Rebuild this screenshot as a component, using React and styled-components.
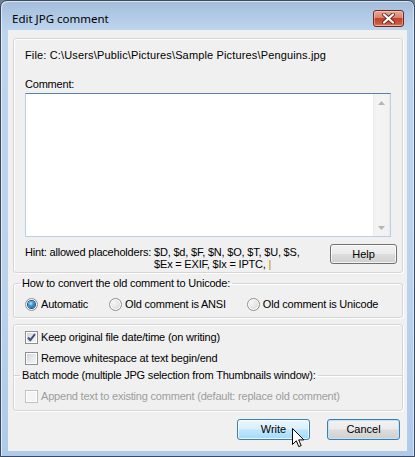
import styled, { createGlobalStyle } from 'styled-components';

const GlobalStyle = createGlobalStyle`
  html, body {
    margin: 0;
    padding: 0;
    background: #6f7f8f;
  }
  body {
    font-family: "Liberation Sans", Arial, sans-serif;
    font-size: 11px;
    letter-spacing: -0.2px;
    color: #000;
  }
  * { box-sizing: border-box; }
`;

const Window = styled.div`
  position: relative;
  width: 415px;
  height: 457px;
  border: 1px solid #3b4b5d;
  border-radius: 7px 7px 0 0;
  background: linear-gradient(180deg, #a3bddb 0, #bdd4ed 28px, #bbd3ed 60%, #aecbea 100%);
  box-shadow: inset 1px 1px 0 rgba(255, 255, 255, 0.6), inset -1px 0 0 rgba(255, 255, 255, 0.5);
  display: flex;
  flex-direction: column;
  padding: 0 7px 5px;
`;

const TitleBar = styled.div`
  height: 29px;
  flex: none;
  display: flex;
  align-items: flex-start;
  justify-content: space-between;
  padding: 0 3px 0 4px;
`;

const Caption = styled.div`
  margin-top: 10px;
  font-family: "Noto Sans", "Open Sans", sans-serif;
  font-size: 11.5px;
  letter-spacing: 0;
  line-height: 16px;
  color: #000;
`;

const CloseButton = styled.div`
  margin-top: 9px;
  width: 31px;
  height: 17px;
  border: 1px solid #6e2a22;
  border-radius: 3px;
  background: linear-gradient(180deg, #e9a99a 0%, #d9826c 45%, #c1412a 50%, #cd5a3e 85%, #e08a6a 100%);
  box-shadow: inset 0 0 0 1px rgba(255, 220, 210, 0.45);
  display: flex;
  align-items: center;
  justify-content: center;
`;

const Client = styled.div`
  flex: 1;
  background: #f0f0f0;
  padding: 8px 4px 0 5px;
  display: flex;
  flex-direction: column;
`;

const Panel = styled.div`
  border: 1px solid #d5d5d5;
  border-radius: 3px;
  box-shadow: inset 1px 1px 0 #fff, 1px 1px 0 #fff;
  padding: ${(p) => p.$pad || '0'};
  margin-top: ${(p) => p.$top || 0}px;
`;

const Line = styled.div`
  line-height: 13px;
  white-space: nowrap;
  margin-top: ${(p) => p.$top || 0}px;
  letter-spacing: ${(p) => p.$spacing ?? -0.2}px;
`;

const CommentBox = styled.div`
  margin: 2px 6px 0 0;
  height: 144px;
  display: flex;
  border: 1px solid;
  border-color: #5682ad #b6d0e8 #b6d0e8 #b6d0e8;
  background: #fff;
`;

const TextArea = styled.div`
  flex: 1;
`;

const ScrollBar = styled.div`
  width: 17px;
  display: flex;
  flex-direction: column;
  justify-content: space-between;
  background: linear-gradient(90deg, #e9e9e9 0, #f4f4f4 2px, #f2f2f2 15px, #e9e9e9 17px);
`;

const ScrollArrow = styled.div`
  height: 17px;
  display: flex;
  align-items: center;
  justify-content: center;
`;

const HintRow = styled.div`
  margin-top: 7px;
  display: flex;
  align-items: flex-start;
  justify-content: space-between;
`;

const Hint = styled.div`
  display: flex;
  padding-top: 2px;
  line-height: 12px;
  white-space: nowrap;
`;

const HintList = styled.div`
  margin-left: 3px;
`;

const Caret = styled.span`
  color: #c28a00;
`;

const Button = styled.div`
  position: relative;
  width: ${(p) => p.$w || 73}px;
  height: ${(p) => p.$h || 21}px;
  border: 1px solid ${(p) => (p.$variant ? '#3c7fb1' : '#707070')};
  border-radius: 3px;
  background: ${(p) =>
    p.$variant === 'hover'
      ? 'linear-gradient(180deg, #eaf6fd 0%, #d9f0fc 48%, #bee6fd 52%, #a7d9f5 100%)'
      : 'linear-gradient(180deg, #f2f2f2 0%, #ebebeb 48%, #dddddd 52%, #cfcfcf 100%)'};
  box-shadow: inset 0 0 0 1px ${(p) => (p.$variant === 'focus' ? '#c4e3f7' : 'rgba(255,255,255,0.75)')};
  display: flex;
  align-items: center;
  justify-content: center;
  line-height: 13px;
  letter-spacing: 0;
  flex: none;
`;

const Group = styled.fieldset`
  margin: ${(p) => p.$top || 0}px 0 0;
  padding: 0;
  min-width: 0;
  border: 1px solid #d5d5d5;
  border-radius: 3px;
  box-shadow: inset 1px 1px 0 #fff, 1px 1px 0 #fff;
  ${(p) =>
    p.$flat &&
    `
    border-width: 1px 0 0 0;
    border-radius: 0;
    box-shadow: inset 0 1px 0 #fff;
  `}
`;

const Legend = styled.legend`
  margin-left: 6px;
  padding: 0 2px;
  line-height: 13px;
  white-space: nowrap;
`;

const GroupBody = styled.div`
  padding: ${(p) => p.$pad};
`;

const RadioRow = styled.div`
  display: flex;
  gap: 21px;
`;

const Option = styled.label`
  display: flex;
  align-items: center;
  gap: 3px;
  height: 14px;
  line-height: 14px;
  white-space: nowrap;
  color: ${(p) => (p.$disabled ? '#9d9d9d' : '#000')};
  margin: ${(p) => p.$m || 0};
`;

const Radio = styled.span`
  width: 13px;
  height: 13px;
  border-radius: 50%;
  border: 1px solid #8f8f8f;
  background: radial-gradient(circle at 35% 35%, #f6f6f6 0, #e6e6e6 45%, #cfcfcf 100%);
  box-shadow: inset 0 0 0 1px #fff;
  display: flex;
  align-items: center;
  justify-content: center;
  flex: none;
  &::after {
    content: '';
    display: ${(p) => (p.$on ? 'block' : 'none')};
    width: 7px;
    height: 7px;
    border-radius: 50%;
    background: radial-gradient(circle at 40% 35%, #b6e4ff 0, #3d96d6 40%, #0e4c86 100%);
    box-shadow: 0 0 0 1px #1b4f7e;
  }
`;

const Check = styled.span`
  width: 13px;
  height: 13px;
  border: 1px solid ${(p) => (p.$disabled ? '#c2c2c2' : '#8e8f8f')};
  background: ${(p) =>
    p.$disabled
      ? '#f4f4f4'
      : 'linear-gradient(135deg, #cbcfd5 0%, #e6e8eb 50%, #f6f6f6 100%)'};
  box-shadow: inset 0 0 0 1px #fff;
  display: flex;
  align-items: center;
  justify-content: center;
  flex: none;
`;

const ButtonRow = styled.div`
  margin: 8px 3px 0 0;
  display: flex;
  justify-content: flex-end;
  gap: 17px;
`;

const Pointer = styled.svg`
  position: absolute;
  left: 54px;
  top: 8px;
  pointer-events: none;
`;

function RadioOption({ on, children }) {
  return (
    <Option>
      <Radio $on={on} />
      {children}
    </Option>
  );
}

function CheckOption({ on, disabled, m, children }) {
  return (
    <Option $disabled={disabled} $m={m}>
      <Check $disabled={disabled}>
        {on && (
          <svg width="11" height="11" viewBox="0 0 11 11">
            <path d="M2 5.5 L4.3 8.2 L9 2.2" fill="none" stroke="#41527f" strokeWidth="2" />
          </svg>
        )}
      </Check>
      {children}
    </Option>
  );
}

export default function App() {
  return (
    <>
      <GlobalStyle />
      <Window>
        <TitleBar>
          <Caption>Edit JPG comment</Caption>
          <CloseButton>
            <svg width="13" height="11" viewBox="0 0 13 11">
              <path d="M2 1.5 L11 9.5 M11 1.5 L2 9.5" stroke="#6a2a20" strokeWidth="4" strokeLinecap="round" />
              <path d="M2 1.5 L11 9.5 M11 1.5 L2 9.5" stroke="#fff" strokeWidth="2.2" strokeLinecap="round" />
            </svg>
          </CloseButton>
        </TitleBar>
        <Client>
          <Panel $pad="10px 5px 2px 11px">
            <Line $spacing={0.15}>File: C:\Users\Public\Pictures\Sample Pictures\Penguins.jpg</Line>
            <Line $top={16}>Comment:</Line>
            <CommentBox>
              <TextArea />
              <ScrollBar>
                <ScrollArrow>
                  <svg width="7" height="4" viewBox="0 0 7 4">
                    <path d="M3.5 0 L7 4 L0 4 Z" fill="#b5b5b5" />
                  </svg>
                </ScrollArrow>
                <ScrollArrow>
                  <svg width="7" height="4" viewBox="0 0 7 4">
                    <path d="M0 0 L7 0 L3.5 4 Z" fill="#b5b5b5" />
                  </svg>
                </ScrollArrow>
              </ScrollBar>
            </CommentBox>
            <HintRow>
              <Hint>
                <span>Hint: allowed placeholders:</span>
                <HintList>
                  <div>$D, $d, $F, $N, $O, $T, $U, $S,</div>
                  <div>
                    $Ex = EXIF, $Ix = IPTC, <Caret>|</Caret>
                  </div>
                </HintList>
              </Hint>
              <Button $w={67} $h={20}>Help</Button>
            </HintRow>
          </Panel>

          <Group $top={4}>
            <Legend>How to convert the old comment to Unicode:</Legend>
            <GroupBody $pad="7px 0 6px 11px">
              <RadioRow>
                <RadioOption on>Automatic</RadioOption>
                <RadioOption>Old comment is ANSI</RadioOption>
                <RadioOption>Old comment is Unicode</RadioOption>
              </RadioRow>
            </GroupBody>
          </Group>

          <Panel $top={6} $pad="5px 0 7px 0">
            <CheckOption on m="0 0 0 11px">Keep original file date/time (on writing)</CheckOption>
            <CheckOption m="7px 0 0 11px">Remove whitespace at text begin/end</CheckOption>
            <Group $flat $top={4}>
              <Legend>Batch mode (multiple JPG selection from Thumbnails window):</Legend>
              <GroupBody $pad="7px 0 0 11px">
                <CheckOption disabled>Append text to existing comment (default: replace old comment)</CheckOption>
              </GroupBody>
            </Group>
          </Panel>

          <ButtonRow>
            <Button $variant="hover">
              Write
              <Pointer width="13" height="20" viewBox="0 0 13 20">
                <path
                  d="M0.5 0.5 L0.5 16.5 L4.3 12.8 L6.8 18.6 L9.2 17.6 L6.7 11.9 L11.8 11.9 Z"
                  fill="#fff"
                  stroke="#000"
                  strokeWidth="1"
                  strokeLinejoin="miter"
                />
              </Pointer>
            </Button>
            <Button $variant="focus">Cancel</Button>
          </ButtonRow>
        </Client>
      </Window>
    </>
  );
}
